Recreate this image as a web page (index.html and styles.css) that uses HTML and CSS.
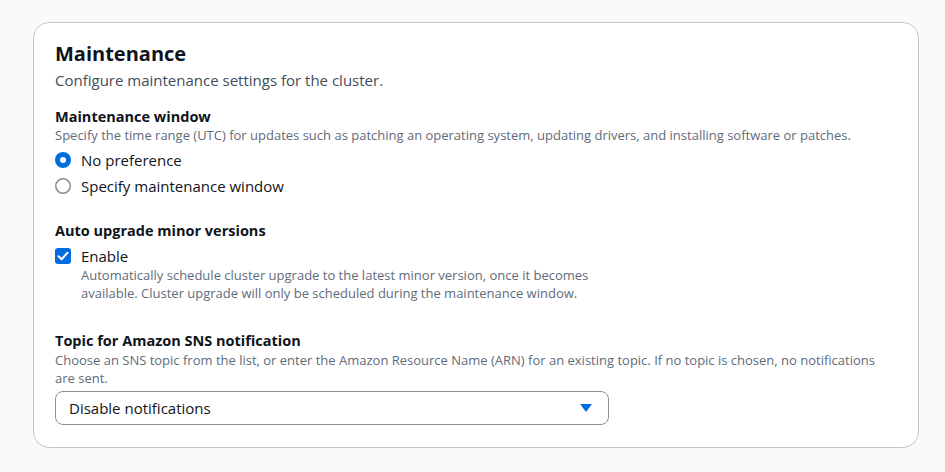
FILE: index.html
```html
<!DOCTYPE html>
<html lang="en">
<head>
<meta charset="utf-8">
<title>Maintenance</title>
<link rel="stylesheet" href="styles.css">
</head>
<body>
<section class="card">
  <h2 class="title">Maintenance</h2>
  <p class="desc">Configure maintenance settings for the cluster.</p>

  <div class="field field-window">
    <div class="label">Maintenance window</div>
    <div class="help">Specify the time range (UTC) for updates such as patching an operating system, updating drivers, and installing software or patches.</div>
    <div class="radios">
      <div class="opt">
        <svg class="ctl" width="16" height="16" viewBox="0 0 16 16"><circle cx="8" cy="8" r="8" fill="#006ce0"/><circle cx="8" cy="8" r="3" fill="#fff"/></svg>
        <span class="opt-text">No preference</span>
      </div>
      <div class="opt">
        <svg class="ctl" width="16" height="16" viewBox="0 0 16 16"><circle cx="8" cy="8" r="7.25" fill="#fff" stroke="#8c8c94" stroke-width="1.5"/></svg>
        <span class="opt-text">Specify maintenance window</span>
      </div>
    </div>
  </div>

  <div class="field field-upgrade">
    <div class="label">Auto upgrade minor versions</div>
    <div class="check">
      <svg class="ctl" width="16" height="16" viewBox="0 0 16 16"><rect x="0" y="0" width="16" height="16" rx="3" fill="#006ce0"/><path d="M3.5 8.2 L6.6 11.2 L12.5 4.8" fill="none" stroke="#fff" stroke-width="2" stroke-linecap="round" stroke-linejoin="round"/></svg>
      <div class="check-body">
        <div class="opt-text">Enable</div>
        <div class="check-help">Automatically schedule cluster upgrade to the latest minor version, once it becomes available. Cluster upgrade will only be scheduled during the maintenance window.</div>
      </div>
    </div>
  </div>

  <div class="field field-sns">
    <div class="label">Topic for Amazon SNS notification</div>
    <div class="help help-wrap">Choose an SNS topic from the list, or enter the Amazon Resource Name (ARN) for an existing topic. If no topic is chosen, no notifications are sent.</div>
    <div class="select">
      <span class="select-text">Disable notifications</span>
      <svg class="caret" width="12" height="9" viewBox="0 0 12 9"><path d="M0 0 H12 L6 8 Z" fill="#006ce0"/></svg>
    </div>
  </div>
</section>
</body>
</html>
```

FILE: styles.css
```css
* { box-sizing: border-box; }

html, body {
  margin: 0;
  padding: 0;
  background: #fafafa;
}

body {
  padding: 22px 26px 24px 33px;
  font-family: "Open Sans", "Noto Sans", sans-serif;
  color: #0f141a;
}

.card {
  width: 886px;
  height: 426px;
  background: #fff;
  border: 1px solid #c6c6cd;
  border-radius: 16px;
  padding: 19px 21px 22px 21px;
}

.title {
  margin: 0;
  font-size: 20px;
  line-height: 24px;
  font-weight: 700;
}

.desc {
  margin: 4px 0 0;
  font-size: 15px;
  line-height: 20px;
  color: #414d5c;
}

.label {
  font-size: 14.5px;
  line-height: 20px;
  font-weight: 700;
}

.help {
  font-size: 13px;
  line-height: 16px;
  color: #5f6b7a;
}

.help-wrap {
  line-height: 18px;
}

.field-window { margin-top: 17px; }
.field-upgrade { margin-top: 25px; }
.field-sns { margin-top: 29px; }

.radios {
  margin-top: 7px;
  display: flex;
  flex-direction: column;
  gap: 6px;
}

.opt {
  display: flex;
  align-items: center;
  gap: 10px;
  height: 20px;
}

.ctl { flex: none; }

.opt-text {
  font-size: 15px;
  line-height: 20px;
  color: #0f141a;
}

.check {
  margin-top: 5px;
  display: flex;
  align-items: flex-start;
  gap: 10px;
}

.check .ctl { margin-top: 2px; }

.check-body { width: 540px; }

.check-help {
  font-size: 13px;
  line-height: 18px;
  color: #5f6b7a;
}

.select {
  margin-top: 4px;
  width: 554px;
  height: 34px;
  border: 1px solid #8c8c94;
  border-radius: 8px;
  display: flex;
  align-items: center;
  justify-content: space-between;
  padding: 0 16px 0 13px;
}

.select-text {
  font-size: 15px;
  line-height: 20px;
  color: #0f141a;
}

.caret { flex: none; }
```
